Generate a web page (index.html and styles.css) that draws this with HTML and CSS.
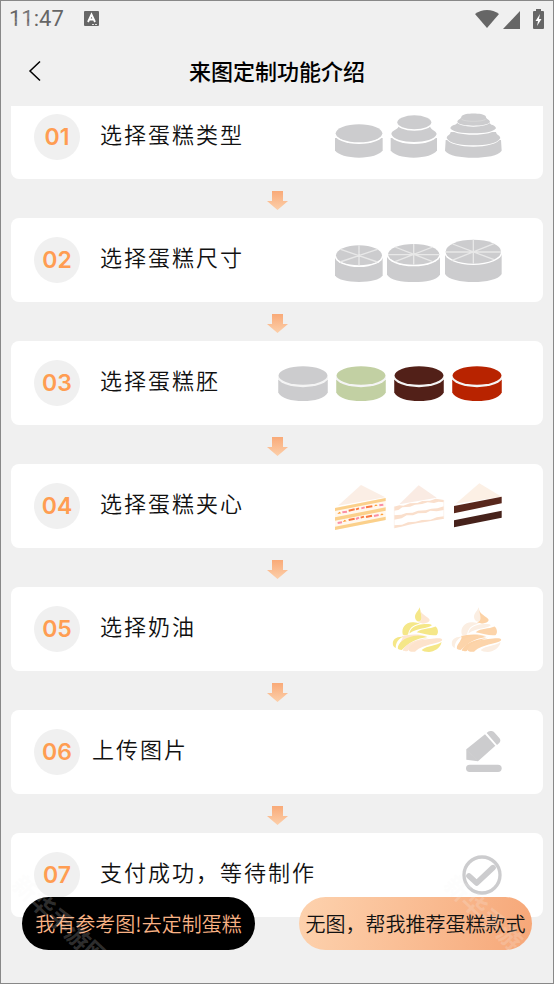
FILE: index.html
```html
<!DOCTYPE html>
<html lang="zh-CN">
<head>
<meta charset="utf-8">
<meta name="viewport" content="width=device-width, initial-scale=1">
<title>来图定制功能介绍</title>
<link rel="stylesheet" href="styles.css">
</head>
<body>
<!-- shared shapes -->
<svg class="defs" aria-hidden="true">
    <linearGradient id="arrowFill" x1="0" y1="0" x2="0" y2="1">
        <stop offset="0" stop-color="#f9aa78"/>
        <stop offset="1" stop-color="#fccfaa"/>
    </linearGradient>
    <symbol id="arrow" viewBox="0 0 21 19">
        <path d="M5 0h11v10h5L10.500 19 0 10h5z" fill="url(#arrowFill)"/>
    </symbol>
    <symbol id="cake" viewBox="0 0 150 106">
        <path d="M0 42H150V80C142 98 110 106 75 106S8 98 0 80z" fill="currentColor"/>
        <ellipse cx="75" cy="31" rx="78" ry="33" fill="#f4f4f4"/>
        <path d="M-5 0H155V31H-5z" fill="#fff"/>
        <ellipse cx="75" cy="29" rx="74" ry="28" fill="currentColor"/>
    </symbol>
    <symbol id="cream" viewBox="0 0 153 142">
        <path class="cream-a" d="M83 4C80 15 68 22 69 34C70 44 76 48 84 46C94 40 88 28 83 4z"/>
        <path class="cream-b" d="M83 4C84 20 92 24 107 35C118 42 114 50 96 53C90 53 84 51 78 50C96 44 86 28 83 4z"/>
        <path class="cream-c" d="M32 86C27 66 40 50 61 49C70 48 78 51 84 54C62 57 52 67 48 86C41 89 35 89 32 86z"/>
        <path class="cream-c" d="M52 83C54 65 71 57 92 55C108 54 119 55 120 58C106 69 77 65 52 83z"/>
        <path class="cream-d" d="M74 79C92 66 113 70 131 62C141 70 140 86 133 88C114 90 98 84 74 79z"/>
        <path class="cream-b" d="M29 91C48 86 72 83 104 90C74 88 48 93 24 112C30 101 34 96 29 91z"/>
        <path class="cream-c" d="M2 115C1 100 14 91 33 93C20 99 10 110 11 127C5 124 2 120 2 115z"/>
        <path class="cream-d" d="M17 128C17 112 36 97 64 91C82 87 98 90 107 94C74 98 50 112 29 133C22 133 18 132 17 128z"/>
        <path class="cream-b" d="M32 134C38 116 70 100 112 96C84 104 64 114 47 136C41 137 35 137 32 134z"/>
        <path class="cream-e" d="M50 134C50 116 78 103 112 100C134 97 150 96 151 102C151 114 96 112 69 138C61 139 53 139 50 134z"/>
        <path class="cream-f" d="M89 133C106 119 136 121 149 109C147 127 126 139 111 139C101 139 92 137 89 133z"/>
    </symbol>
</svg>

<div class="status">
    <span class="clock">11:47</span>
    <svg class="badge" width="15" height="15" viewBox="0 0 15 15" aria-hidden="true">
        <rect width="15" height="15" rx="1" fill="#666"/>
        <path d="M4 11L7.500 3.500 11 11M5 8.500H10" fill="none" stroke="#fff" stroke-width="1.800"/>
        <path d="M8 13.500H14" stroke="#ddd" stroke-dasharray="2 1"/>
    </svg>
    <svg class="system" width="70" height="20" viewBox="0 0 70 20" fill="#666" aria-hidden="true">
        <path d="M0 5C7-0.300 17-0.300 24 5L12 19z"/>
        <path d="M28 20L45 2V20z"/>
        <path d="M61 0h5v2h2a1 1 0 0 1 1 1v16a1 1 0 0 1-1 1h-9a1 1 0 0 1-1-1V3a1 1 0 0 1 1-1h2z"/>
        <path d="M65 5L60.500 12H63L62 17 66.500 10H64z" fill="#fff"/>
    </svg>
</div>

<header class="nav">
    <a class="back" href="#" aria-label="返回">
        <svg width="14" height="22" viewBox="0 0 14 22"><path d="M12 1.500L2 11 12 20.500" fill="none" stroke="#000" stroke-width="1.500"/></svg>
    </a>
    <h1>来图定制功能介绍</h1>
</header>

<main>
<ol class="steps">
    <li>
        <div class="card">
            <span class="num">01</span><span class="name">选择蛋糕类型</span>
            <svg class="pic" width="167" height="49" viewBox="45 34 501 147" fill="#ccccce">
                <path d="M45 109H188V146C180 160 151 168 117 168S53 160 45 146z"/>
                <ellipse cx="117" cy="97" rx="74" ry="30" fill="#fff"/>
                <ellipse cx="117" cy="95" rx="70" ry="27"/>
                <path d="M212 109H351V146C343 160 315 168 281 168S220 160 212 146z"/>
                <ellipse cx="282" cy="97" rx="72" ry="30" fill="#fff"/>
                <path d="M214 97C216 85 233 85 236 74H330C332 86 348 86 350 97C346 113 315 121 282 121S218 113 214 97z"/>
                <ellipse cx="283" cy="64" rx="54" ry="23" fill="#fff"/>
                <ellipse cx="283" cy="62" rx="51" ry="21"/>
                <path d="M377 115H543L545 147C535 162 499 168 460 168S386 162 375 147z"/>
                <path d="M376 109C387 127 422 135 460 135S533 127 544 109V90H376z" fill="#fff"/>
                <path d="M380 109C382 99 391 101 392 91H528C529 101 539 99 541 109C534 125 497 131 460 131S387 125 380 109z"/>
                <path d="M388 78C395 93 425 99 460 99S523 93 531 78V64H388z" fill="#fff"/>
                <path d="M391 80C393 69 410 72 413 62H508C510 72 526 69 528 80C521 91 493 95 460 95S397 91 391 80z"/>
                <path d="M409 59C412 70 434 75 460 75S509 70 513 59V50H409z" fill="#fff"/>
                <path d="M412 61C413 52 423 54 425 43C433 33 488 33 497 43C498 54 508 52 510 61C506 69 484 72 460 72S417 69 412 61z"/>
                <path d="M425 53C434 61 487 61 497 53" fill="none" stroke="#ddd" stroke-width="2"/>
            </svg>
        </div>
        <svg class="arrow"><use href="#arrow"/></svg>
    </li>
    <li>
        <div class="card">
            <span class="num">02</span><span class="name">选择蛋糕尺寸</span>
            <svg class="pic" width="167" height="43" viewBox="45 53 501 129" fill="#ccccce">
                <path d="M45 105H188V162C180 176 151 182 117 182S53 176 45 162z"/>
                <ellipse cx="117" cy="104" rx="73" ry="33" fill="#fff"/>
                <ellipse cx="117" cy="102" rx="69" ry="30"/>
                <path d="M201 102H360V160C350 176 318 182 281 182S211 176 201 160z"/>
                <ellipse cx="281" cy="101" rx="81" ry="34" fill="#fff"/>
                <ellipse cx="281" cy="99" rx="77" ry="31"/>
                <path d="M375 91H545V158C535 175 499 182 460 182S385 175 375 158z"/>
                <ellipse cx="460" cy="93" rx="87" ry="38" fill="#fff"/>
                <ellipse cx="460" cy="91" rx="83" ry="36"/>
                <path d="M117 72V132M62 84L172 122M172 84L60 122M281 68V130M204 100H358M225 77L338 121M338 77L225 121M460 55V127M377 92H543M398 68L522 115M522 67L396 117" fill="none" stroke="#e8e8e8" stroke-width="4"/>
            </svg>
        </div>
        <svg class="arrow"><use href="#arrow"/></svg>
    </li>
    <li>
        <div class="card">
            <span class="num">03</span><span class="name">选择蛋糕胚</span>
            <div class="pic bases">
                <svg class="base plain"><use href="#cake"/></svg>
                <svg class="base matcha"><use href="#cake"/></svg>
                <svg class="base cocoa"><use href="#cake"/></svg>
                <svg class="base velvet"><use href="#cake"/></svg>
            </div>
        </div>
        <svg class="arrow"><use href="#arrow"/></svg>
    </li>
    <li>
        <div class="card">
            <span class="num">04</span><span class="name">选择蛋糕夹心</span>
            <svg class="pic" width="167" height="47" viewBox="45 54 501 141">
                <!-- fruit -->
                <path d="M54 122L123 60 196 97z" fill="#fbeee5"/>
                <path d="M45 128L197 98V165L45 195z" fill="#fff8ef"/>
                <path d="M45 129L197 99V108L45 138zM45 157L197 127V137L45 167zM45 185L197 155V165L45 195z" fill="#fbd08b"/>
                <path d="M52 147l6-7 6 5zM162 124l6-6 5 4zM68 171l6-7 6 5zM180 151l6-6 5 5z" fill="#ff9e36"/>
                <path d="M86 137L104 133M108 133L117 130M138 127L157 124M86 165L104 161M122 158L132 155M138 156L156 152" stroke="#fa7a42" stroke-width="6"/>
                <path d="M67 142L81 140M124 130L134 127M178 121L190 119M53 174L66 172M108 162L117 158M162 153L176 150" stroke="#fb8fa5" stroke-width="6"/>
                <!-- plain cream -->
                <path d="M238 118L296 61 350 98z" fill="#faebe3"/>
                <path d="M222 125L238 121 250 122 270 115 292 114 307 108 330 107 347 101 372 105V112L356 110 342 114 323 112 306 117 285 119 270 125 247 127 235 135 222 137z" fill="#fadfcc"/>
                <path d="M222 151L244 149 259 144 278 143 294 137 317 136 334 131 352 130 372 124V135L350 139 331 137 318 144 294 145 279 151 260 151 245 160 222 164z" fill="#fadfcc"/>
                <path d="M222 181L246 179 264 172 287 170 306 165 332 164 350 157 372 154V161L346 166 320 170 294 174 267 179 244 185 222 190z" fill="#fadfcc"/>
                <path d="M223 126V189M371 105V160" stroke="#fcefe7" stroke-width="2"/>
                <!-- chocolate -->
                <path d="M407 116L478 55 545 95z" fill="#fcf0e5"/>
                <path d="M402 123L545 95V115L402 145z" fill="#58271c"/>
                <path d="M402 166L545 137V158L402 187z" fill="#46221b"/>
            </svg>
        </div>
        <svg class="arrow"><use href="#arrow"/></svg>
    </li>
    <li>
        <div class="card">
            <span class="num">05</span><span class="name">选择奶油</span>
            <div class="pic creams">
                <svg class="cream lemon"><use href="#cream"/></svg>
                <svg class="cream peach"><use href="#cream"/></svg>
            </div>
        </div>
        <svg class="arrow"><use href="#arrow"/></svg>
    </li>
    <li>
        <div class="card upload">
            <span class="num">06</span><span class="name">上传图片</span>
            <svg class="pic" width="36" height="43" viewBox="80 62 108 129" fill="#ccccce">
                <path d="M81 117L137 72 168 106 116 153 81 148z"/>
                <path d="M142 68C150 60 160 60 166 67L180 83C186 91 183 97 173 104z"/>
                <path d="M82 119L114 151" stroke="#d8d8d8" stroke-width="1"/>
                <rect x="80" y="163" width="107" height="22" rx="11"/>
            </svg>
        </div>
        <svg class="arrow"><use href="#arrow"/></svg>
    </li>
    <li>
        <div class="card">
            <span class="num">07</span><span class="name">支付成功，等待制作</span>
            <svg class="pic" width="40" height="40" viewBox="0 0 120 120" fill="none" stroke="#ccccce">
                <circle cx="60" cy="60" r="54" stroke-width="10"/>
                <path d="M21 63L44 84 93 38" stroke-width="17" stroke-linecap="round" stroke-linejoin="round"/>
            </svg>
        </div>
    </li>
</ol>
</main>

<footer class="actions">
    <button type="button" class="btn dark">我有参考图!去定制蛋糕</button>
    <button type="button" class="btn light">无图，帮我推荐蛋糕款式</button>
</footer>

<div class="marks" aria-hidden="true">
    <div class="pair"><span class="mark">新华手游网</span><span class="mark">新华手游网</span></div>
    <div class="pair"><span class="mark">新华手游网</span><span class="mark">新华手游网</span></div>
</div>
</body>
</html>
```

FILE: styles.css
```css
* {
	box-sizing: border-box;
}
body {
	margin: 0;
	height: 100vh;
	display: flex;
	flex-direction: column;
	position: relative;
	overflow: hidden;
	border: 1px solid #888;
	background: #f0f0f0;
	color: #111;
	font-family: "Noto Sans CJK SC", sans-serif;
}
.defs {
	position: absolute;
	width: 0;
	height: 0;
}

/* status bar */
.status {
	flex: none;
	display: flex;
	align-items: center;
	height: 35px;
	padding: 0 8px;
	color: #666;
}
.clock {
	font: 22px Roboto, sans-serif;
}
.badge {
	margin-left: 20px;
}
.system {
	margin-left: auto;
}

/* title bar */
.nav {
	flex: none;
	display: grid;
	grid-template-columns: 60px 1fr 60px;
	align-items: center;
	height: 70px;
}
.back {
	display: flex;
	padding-left: 27px;
}
.nav h1 {
	margin: 0;
	padding-bottom: 2px;
	color: #000;
	font-size: 22px;
	font-weight: 500;
	line-height: 32px;
	text-align: center;
}

/* steps */
main {
	flex: 1;
	min-height: 0;
	overflow: hidden;
	padding: 0 10px;
}
.steps {
	margin: -11px 0 0;
	padding: 0;
	list-style: none;
}
.card {
	display: flex;
	align-items: center;
	gap: 20px;
	height: 84px;
	padding: 0 41px 0 23px;
	border-radius: 8px;
	background: #fff;
}
.upload {
	gap: 12px;
}
.num {
	flex: none;
	width: 46px;
	border-radius: 50%;
	background: #f0f0f0;
	color: #ff9d52;
	font: 600 23px/46px Inter, sans-serif;
	text-align: center;
}
.name {
	font-size: 22px;
	font-weight: 350;
	line-height: 32px;
	letter-spacing: 2px;
	padding-bottom: 8px;
}
.pic {
	flex: none;
	margin-left: auto;
}
.arrow {
	display: block;
	width: 21px;
	height: 19px;
	margin: 12px auto 8px;
}
.bases,
.creams {
	display: flex;
	gap: 8px;
}
.base {
	width: 50px;
	height: 35px;
}
.plain {
	color: #ccccce;
}
.matcha {
	color: #c2d0a3;
}
.cocoa {
	color: #522018;
}
.velvet {
	color: #b82300;
}
.cream {
	width: 51px;
	height: 47px;
}
.lemon {
	--deep: #f5e788;
	--soft: #fde6d2;
	--side: #f5e788;
	--band: #fde3cc;
	--foot: #f5e788;
}
.peach {
	--deep: #fbeee2;
	--soft: #fcd2a6;
	--side: #fcd4aa;
	--band: #fcd4aa;
	--foot: #fbeee2;
}
.cream-a,
.cream-c {
	fill: var(--deep);
}
.cream-b {
	fill: var(--soft);
}
.cream-d {
	fill: var(--side);
}
.cream-e {
	fill: var(--band);
}
.cream-f {
	fill: var(--foot);
}

/* floating buttons */
.actions {
	position: absolute;
	left: 21px;
	right: 21px;
	bottom: 33px;
	display: flex;
	justify-content: space-between;
	gap: 16px;
}
.btn {
	flex: 0 1 233px;
	height: 53px;
	padding: 0;
	border: 0;
	border-radius: 27px;
	font: 350 20px/30px "Noto Sans CJK SC", sans-serif;
	white-space: nowrap;
}
.dark {
	background: #000;
	color: #f9b284;
}
.light {
	background: linear-gradient(100deg, #fdd2ae, #f6a778);
	color: #111;
}

/* watermark */
.marks {
	position: absolute;
	inset: 0;
	display: flex;
	flex-direction: column;
	justify-content: space-between;
	padding: 40px 0 48px;
	pointer-events: none;
}
.pair {
	display: flex;
	justify-content: space-between;
}
.mark {
	color: rgba(245, 245, 245, 0.2);
	font-size: 24px;
	font-weight: 700;
	line-height: 30px;
	transform: rotate(43deg);
}
```
